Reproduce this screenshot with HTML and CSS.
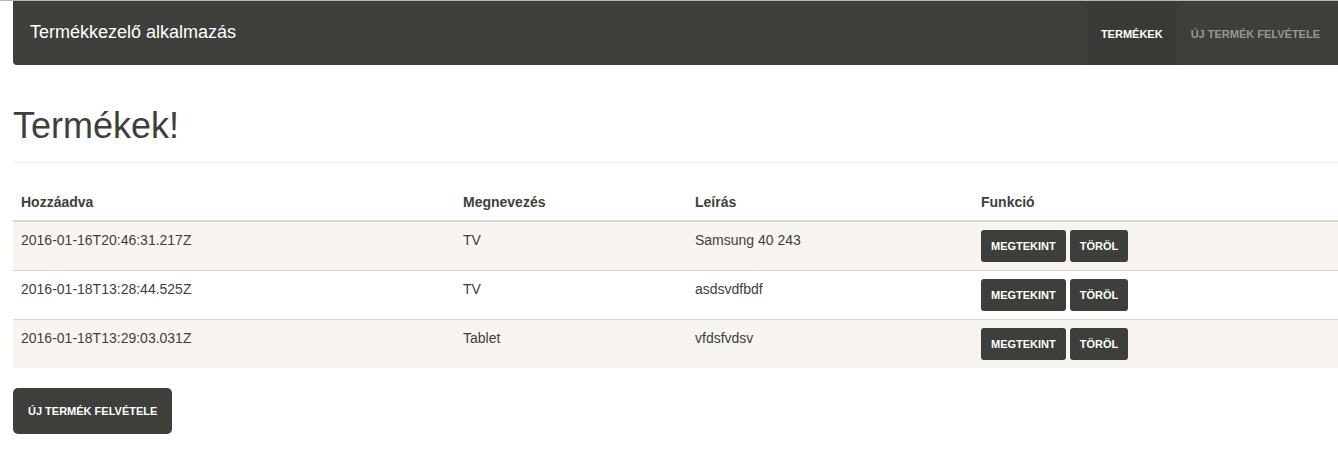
FILE: index.html
```html
<!DOCTYPE html>
<html lang="hu">
<head>
<meta charset="utf-8">
<title>Termékkezelő alkalmazás</title>
<link rel="stylesheet" href="styles.css">
</head>
<body>
<div class="page">
  <nav class="navbar">
    <div class="brand">Termékkezelő alkalmazás</div>
    <ul class="nav">
      <li><a class="nav-link active" href="#">Termékek</a></li>
      <li><a class="nav-link" href="#">Új termék felvétele</a></li>
    </ul>
  </nav>

  <div class="page-header">
    <h1>Termékek!</h1>
  </div>

  <table class="table">
    <colgroup>
      <col class="c1"><col class="c2"><col class="c3"><col class="c4">
    </colgroup>
    <thead>
      <tr><th>Hozzáadva</th><th>Megnevezés</th><th>Leírás</th><th>Funkció</th></tr>
    </thead>
    <tbody>
      <tr class="odd">
        <td>2016-01-16T20:46:31.217Z</td><td>TV</td><td>Samsung 40 243</td>
        <td><div class="actions"><button class="btn">Megtekint</button><button class="btn">Töröl</button></div></td>
      </tr>
      <tr>
        <td>2016-01-18T13:28:44.525Z</td><td>TV</td><td>asdsvdfbdf</td>
        <td><div class="actions"><button class="btn">Megtekint</button><button class="btn">Töröl</button></div></td>
      </tr>
      <tr class="odd">
        <td>2016-01-18T13:29:03.031Z</td><td>Tablet</td><td>vfdsfvdsv</td>
        <td><div class="actions"><button class="btn">Megtekint</button><button class="btn">Töröl</button></div></td>
      </tr>
    </tbody>
  </table>

  <button class="btn btn-lg">Új termék felvétele</button>
</div>
</body>
</html>
```
FILE: styles.css
```css
html {
  overflow: hidden;
  border-top: 1px solid #b4b4b4;
  background: #fff;
}
body {
  margin: 0;
  font-family: "Liberation Sans", Arial, sans-serif;
  font-size: 14px;
  line-height: 20px;
  color: #3e3f3a;
}
.page {
  width: 1350px;
  box-sizing: border-box;
  padding-left: 13px;
}
.navbar {
  height: 64px;
  background: #3e3f3a;
  border-radius: 0 0 4px 4px;
  display: flex;
  justify-content: space-between;
  align-items: flex-start;
}
.brand {
  color: #fff;
  font-size: 18px;
  line-height: 20px;
  padding: 21px 0 0 17px;
}
.nav {
  list-style: none;
  margin: 1px 16px 0 0;
  padding: 0;
  display: flex;
}
.nav-link {
  display: block;
  padding: 24px 14px 23px 14px;
  font-size: 11px;
  line-height: 16px;
  font-weight: bold;
  text-transform: uppercase;
  text-decoration: none;
  color: #98978b;
  border-radius: 4px 4px 0 0;
}
.nav-link.active {
  color: #fff;
  background: #393a35;
}
.page-header {
  margin-top: 41px;
  padding-bottom: 16px;
  border-bottom: 1px solid #f0eeea;
}
h1 {
  margin: 0;
  font-size: 36px;
  line-height: 40px;
  font-weight: normal;
}
.table {
  width: 100%;
  margin: 21px 0 20px;
  border-collapse: collapse;
  table-layout: fixed;
}
.c1 { width: 442px; }
.c2 { width: 232px; }
.c3 { width: 286px; }
.table th {
  text-align: left;
  font-weight: bold;
  padding: 8px;
  border-bottom: 2px solid #dfd7ca;
}
.table td {
  padding: 8px;
  vertical-align: top;
  border-top: 1px solid #dfd7ca;
}
.table tbody tr:first-child td {
  border-top: 0;
}
.table tr.odd td {
  background: #f8f5f0;
}
.actions {
  display: flex;
  gap: 4px;
}
.btn {
  font-family: "Liberation Sans", Arial, sans-serif;
  font-size: 11px;
  line-height: 16px;
  font-weight: bold;
  text-transform: uppercase;
  color: #fff;
  background: #3e3f3a;
  border: 0;
  border-radius: 3px;
  padding: 8px 10px;
  cursor: pointer;
}
.btn-lg {
  padding: 15px 15px;
  border-radius: 5px;
}
```
